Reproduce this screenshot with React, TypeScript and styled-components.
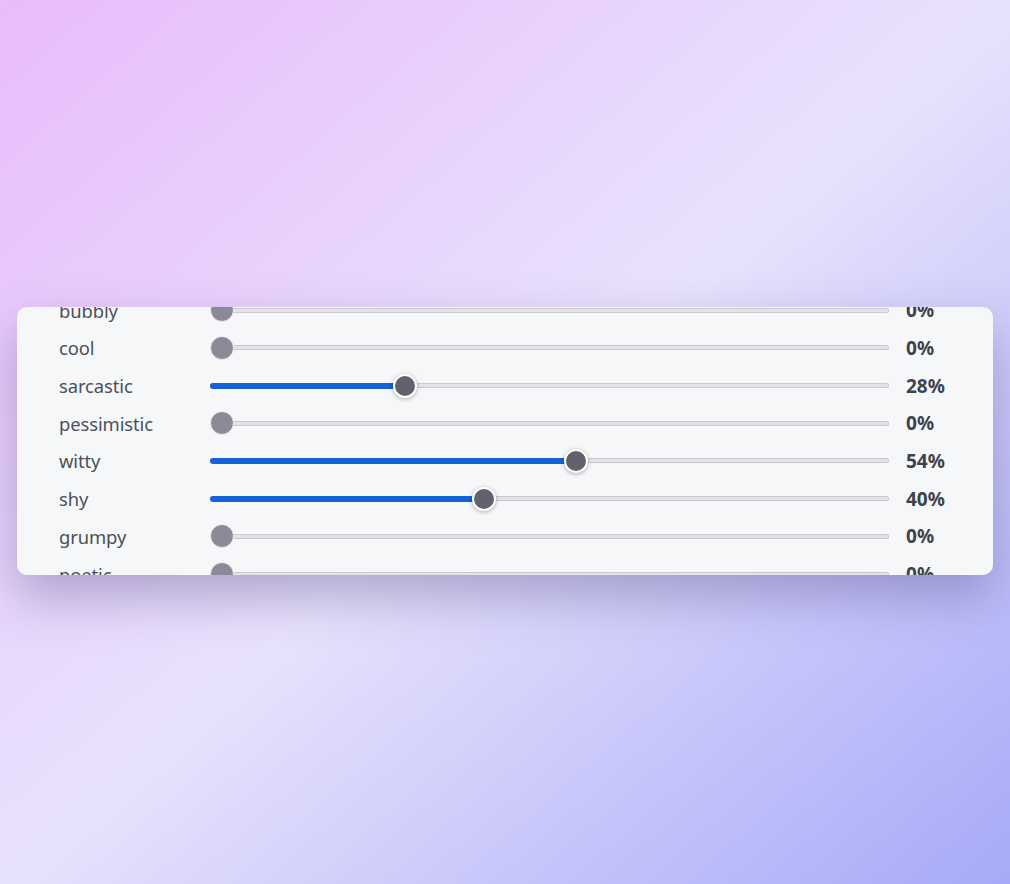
import React, { useLayoutEffect, useRef } from 'react';
import styled, { createGlobalStyle } from 'styled-components';

interface Trait {
    name: string;
    value: number;
}

const traits: Trait[] = [
    { name: 'friendly', value: 0 },
    { name: 'formal', value: 0 },
    { name: 'bubbly', value: 0 },
    { name: 'cool', value: 0 },
    { name: 'sarcastic', value: 28 },
    { name: 'pessimistic', value: 0 },
    { name: 'witty', value: 54 },
    { name: 'shy', value: 40 },
    { name: 'grumpy', value: 0 },
    { name: 'poetic', value: 0 },
    { name: 'dramatic', value: 0 }
];

const ROW_HEIGHT = 37.7;
const THUMB = 24;

const GlobalStyle = createGlobalStyle`
    html, body {
        margin: 0;
        height: 100%;
    }
    body {
        font-family: 'Noto Sans', 'Open Sans', sans-serif;
        background: linear-gradient(to bottom right, #e9bcfc 0%, #e8e2fc 50%, #a6aaf8 100%);
        background-attachment: fixed;
    }
    #root {
        height: 100%;
    }
`;

const Page = styled.div`
    height: 884px;
    display: flex;
    align-items: center;
    justify-content: center;
    padding: 0 17px;
    box-sizing: border-box;
`;

const Card = styled.div`
    width: 976px;
    height: 268px;
    margin-top: -2px;
    background: #f6f7f9;
    border-radius: 10px;
    box-shadow: 0 22px 50px rgba(70, 60, 120, 0.35);
    overflow-y: auto;
    scrollbar-width: none;

    &::-webkit-scrollbar {
        display: none;
    }
`;

const List = styled.div`
    padding: 0 47px 0 42px;
`;

const Row = styled.div`
    display: grid;
    grid-template-columns: 151px 1fr 57px;
    align-items: center;
    height: ${ROW_HEIGHT}px;
`;

const Label = styled.span`
    font-size: 18.4px;
    color: #4b505b;
    letter-spacing: -0.1px;
`;

const Value = styled.span`
    font-size: 19px;
    font-weight: 700;
    color: #3d424c;
    padding-left: 17px;
`;

const Track = styled.div`
    position: relative;
    height: 5px;
    border-radius: 3px;
    background: #e4e4e8;
    box-shadow: inset 0 0 0 1px #c9c9cf;
`;

const Fill = styled.div`
    position: absolute;
    left: 0;
    top: -0.5px;
    height: 6px;
    border-radius: 3px;
    background: #1463d6;
`;

interface ThumbProps {
    $active: boolean;
}

const Thumb = styled.div<ThumbProps>`
    position: absolute;
    top: 50%;
    width: ${THUMB}px;
    height: ${THUMB}px;
    margin-left: -${THUMB / 2}px;
    transform: translateY(-50%);
    box-sizing: border-box;
    border-radius: 50%;
    background: ${(p) => (p.$active ? '#62626f' : '#8b8b97')};
    border: ${(p) => (p.$active ? '2px solid #ffffff' : '1px solid #f1f1f4')};
    box-shadow: ${(p) => (p.$active ? '0 1px 4px rgba(0, 0, 0, 0.3)' : 'none')};
`;

const Slider: React.FC<{ value: number }> = ({ value }) => {
    const pos = `calc(${THUMB / 2}px + (100% - ${THUMB}px) * ${value / 100})`;
    return (
        <Track>
            {value > 0 && <Fill style={{ width: pos }} />}
            <Thumb $active={value > 0} style={{ left: pos }} />
        </Track>
    );
};

export default function App() {
    const cardRef = useRef<HTMLDivElement>(null);

    useLayoutEffect(() => {
        if (cardRef.current) {
            cardRef.current.scrollTop = ROW_HEIGHT * 2 + 16;
        }
    }, []);

    return (
        <>
            <GlobalStyle />
            <Page>
                <Card ref={cardRef}>
                    <List>
                        {traits.map((t) => (
                            <Row key={t.name}>
                                <Label>{t.name}</Label>
                                <Slider value={t.value} />
                                <Value>{t.value}%</Value>
                            </Row>
                        ))}
                    </List>
                </Card>
            </Page>
        </>
    );
}
